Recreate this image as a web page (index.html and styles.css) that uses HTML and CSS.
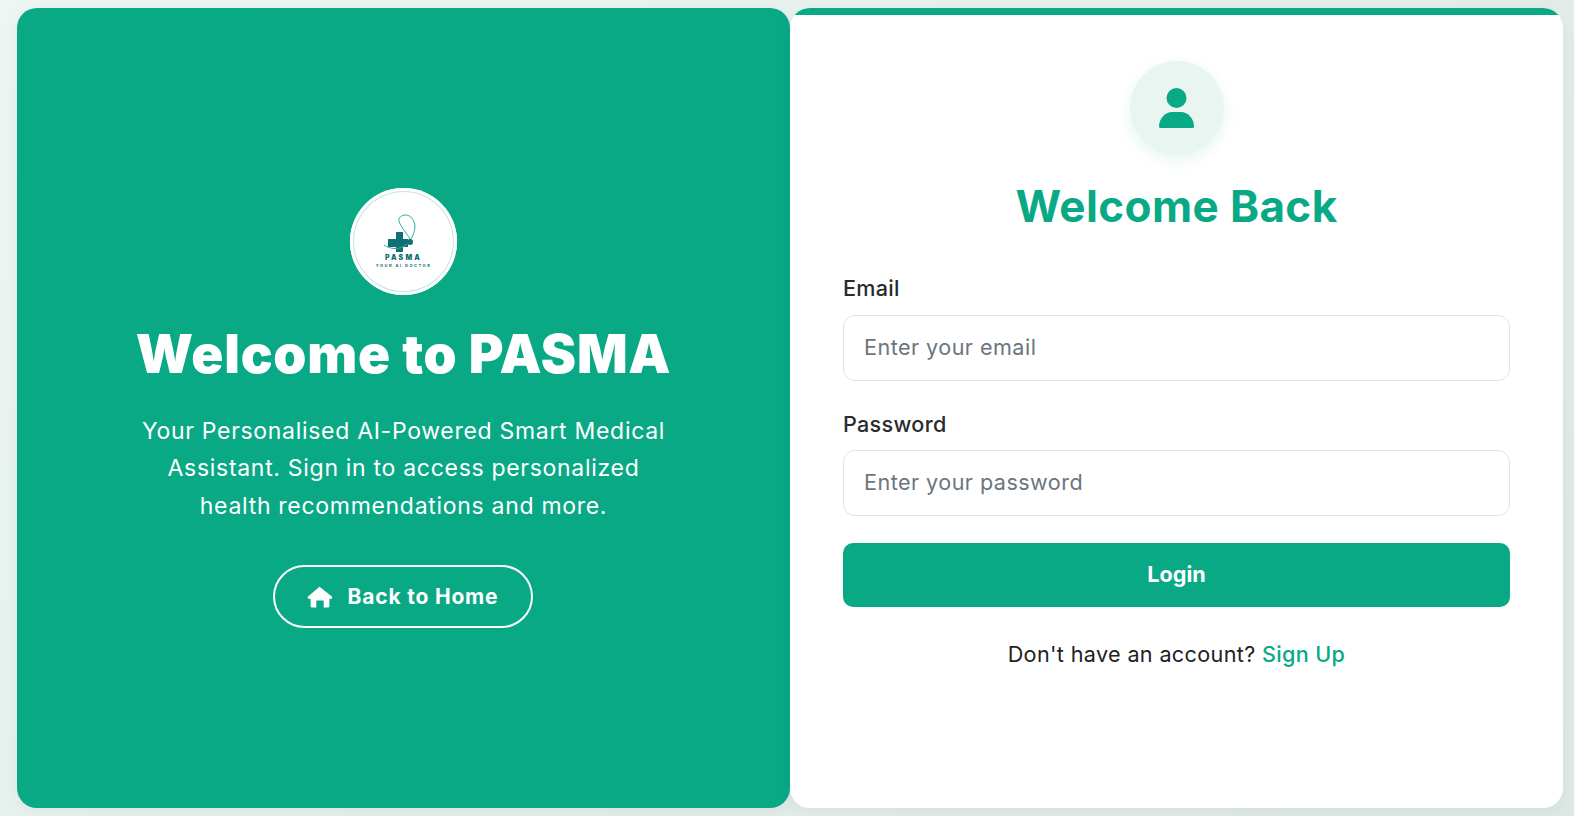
FILE: index.html
```html
<!DOCTYPE html>
<html lang="en">
<head>
  <meta charset="UTF-8" />
  <title>PASMA – Login</title>
  <link rel="stylesheet" href="styles.css">
</head>
<body>

  <main class="auth">
    <section class="intro">
      <div class="logo">
        <svg class="logo-mark" viewBox="0 0 40 40" width="40" height="40" aria-hidden="true">
          <path d="M12 20h7v7h5v8h-5v5h-7v-5H4v-8h8z" fill="#0e7176"/>
          <path d="M0 33C6 37 14 38 20 34 26 30 30 24 31 15 31 8 26 3 22 3 17 3 14 6 15 9 16 14 22 20 26 27" fill="none" stroke="#3aa99f" stroke-width="1"/>
          <circle cx="26" cy="30" r="3" fill="#0e7176"/>
        </svg>
        <span class="logo-name">PASMA</span>
        <span class="logo-tag">YOUR AI DOCTOR</span>
      </div>
      <h1>Welcome to PASMA</h1>
      <p>Your Personalised AI-Powered Smart Medical Assistant. Sign in to access personalized health recommendations and more.</p>
      <a class="home-btn" href="#">
        <svg viewBox="0 0 24 22" width="25" height="22" aria-hidden="true">
          <path d="M12 .8 .6 10.6c-.9.9-.3 2.2.9 2.2h1.6v7.2c0 .9.7 1.6 1.6 1.6h4.1v-6.2c0-.6.4-1 1-1h5.4c.6 0 1 .4 1 1v6.2h4.1c.9 0 1.6-.7 1.6-1.6v-7.2h1.6c1.2 0 1.8-1.3.9-2.2z" fill="#fff"/>
        </svg>
        Back to Home
      </a>
    </section>

    <section class="login">
      <div class="avatar">
        <svg viewBox="0 0 35 40" width="35" height="40" aria-hidden="true">
          <circle cx="17.5" cy="10" r="10" fill="#0aa986"/>
          <path d="M1.5 40C.6 40 0 39.4 0 38.5 0 31 6 24 13 24h9c7 0 13 7 13 14.5 0 .9-.6 1.5-1.5 1.5z" fill="#0aa986"/>
        </svg>
      </div>
      <h2>Welcome Back</h2>
      <form class="login-form">
        <label for="email">Email</label>
        <input type="email" id="email" placeholder="Enter your email">
        <label for="password">Password</label>
        <input type="password" id="password" placeholder="Enter your password">
        <button type="button">Login</button>
      </form>
      <p class="signup">Don't have an account? <a href="#">Sign Up</a></p>
    </section>
  </main>

</body>
</html>
```

FILE: styles.css
```css
* {
  box-sizing: border-box;
}
body {
  font-family: Inter, sans-serif;
  background: linear-gradient(135deg, #edf6f2, #dde9e5);
  margin: 0;
  height: 816px;
  padding: 8px 11px 8px 17px;
  overflow: hidden;
}
.auth {
  display: flex;
  height: 100%;
}
.intro {
  width: 773px;
  background: #0aa986;
  border-radius: 20px;
  color: #fff;
  display: flex;
  flex-direction: column;
  align-items: center;
  text-align: center;
  padding-top: 180px;
  box-shadow: 0 4px 20px rgba(0,0,0,0.05);
}
.logo {
  width: 107px;
  height: 107px;
  border-radius: 50%;
  background: #fff;
  display: flex;
  flex-direction: column;
  align-items: center;
  padding-top: 24px;
  color: #0e6e73;
  box-shadow: inset 0 0 0 3px #fff, inset 0 0 0 4px #bfe6de;
}
.logo-mark {
  flex: none;
  margin-bottom: 1px;
}
.logo-name {
  font-size: 7px;
  font-weight: 900;
  letter-spacing: 2.2px;
  line-height: 9px;
}
.logo-tag {
  font-size: 4px;
  font-weight: 700;
  letter-spacing: 1.5px;
  line-height: 7px;
}
h1 {
  font-size: 53px;
  font-weight: 900;
  line-height: 72px;
  margin: 23px 0 0;
  letter-spacing: 0.75px;
}
.intro p {
  width: 535px;
  font-size: 23px;
  line-height: 37.4px;
  letter-spacing: 0.7px;
  margin: 23px 0 0;
}
.home-btn {
  margin: 40px 2px 0 0;
  width: 260px;
  height: 63px;
  border: 2px solid #fff;
  border-radius: 32px;
  color: #fff;
  text-decoration: none;
  font-size: 21px;
  font-weight: 700;
  letter-spacing: 0.8px;
  display: flex;
  align-items: center;
  justify-content: center;
  gap: 16px;
}
.login {
  flex: 1;
  position: relative;
  overflow: hidden;
  background: #fff;
  border-radius: 20px;
  padding: 53px 53px 0;
  display: flex;
  flex-direction: column;
  align-items: center;
  box-shadow: 0 4px 20px rgba(0,0,0,0.05);
}
.login::before {
  content: "";
  position: absolute;
  top: 0;
  left: 0;
  right: 0;
  height: 7px;
  background: #0aa986;
}
.avatar {
  width: 94px;
  height: 94px;
  border-radius: 50%;
  background: #e8f5f1;
  display: flex;
  align-items: center;
  justify-content: center;
  box-shadow: 0 5px 15px rgba(10,169,134,0.1);
}
h2 {
  color: #0aa986;
  font-size: 44px;
  font-weight: 700;
  line-height: 60px;
  letter-spacing: 0.4px;
  margin: 21px 0 0;
}
.login-form {
  width: 100%;
  display: flex;
  flex-direction: column;
  margin-top: 36px;
}
label {
  font-size: 21.6px;
  font-weight: 500;
  letter-spacing: 0.3px;
  color: #2b2b2b;
  line-height: 32px;
  margin-bottom: 11px;
}
input {
  height: 66px;
  border: 1px solid #dee2e6;
  border-radius: 12px;
  padding: 0 20px 2px;
  font-family: Inter, sans-serif;
  font-size: 21.6px;
  letter-spacing: 0.45px;
  margin-bottom: 26px;
}
input + label {
  margin-top: 1px;
  margin-bottom: 10px;
}
input::placeholder {
  color: #6c757d;
}
button {
  height: 64px;
  border: none;
  border-radius: 10px;
  margin-top: 1px;
  padding-bottom: 3px;
  background: #0aa986;
  color: #fff;
  font-family: Inter, sans-serif;
  font-size: 21.6px;
  font-weight: 700;
}
.signup {
  font-size: 21.6px;
  letter-spacing: 0.35px;
  color: #222;
  margin: 31px 0 0;
  line-height: 32px;
}
.signup a {
  color: #0aa986;
  font-weight: 500;
  text-decoration: none;
}
```
